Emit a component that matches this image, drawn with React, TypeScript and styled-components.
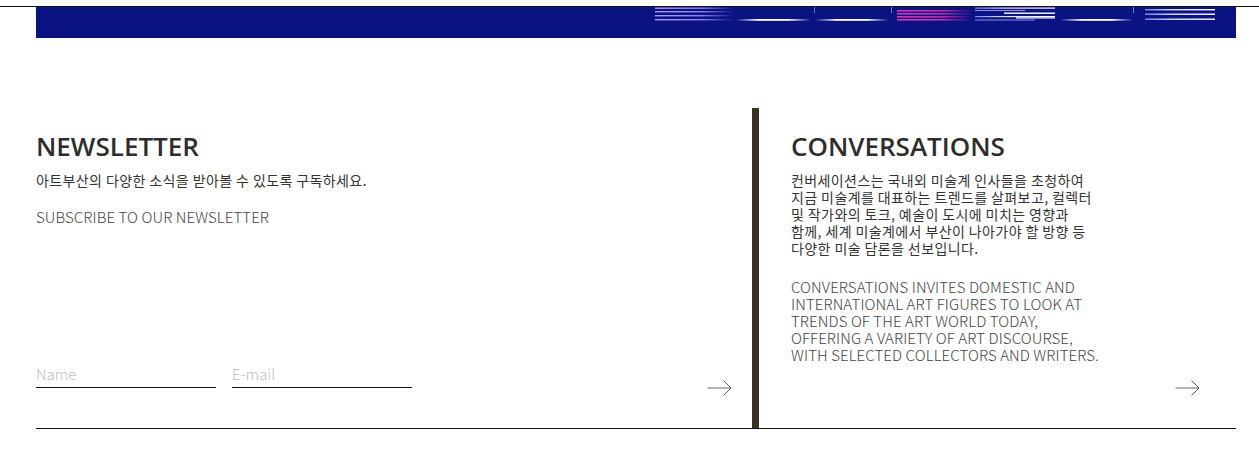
import React from "react";
import styled, { createGlobalStyle } from "styled-components";

const GlobalStyle = createGlobalStyle`
  html, body { margin: 0; padding: 0; background: #fff; }
  body { font-family: "Noto Sans", "Noto Sans CJK KR", sans-serif; color: #333; }
  * { box-sizing: border-box; }
`;

const Page = styled.div`
  width: 1259px;
  padding-top: 6px;
`;

const TopRule = styled.div`
  height: 1px;
  background: #111;
`;

const Banner = styled.div`
  margin-left: 36px;
  width: 1200px;
  height: 31px;
  background: #0b1282;
  line-height: 0;
`;

const Section = styled.section`
  margin: 70px 0 0 36px;
  width: 1200px;
  height: 321px;
  display: grid;
  grid-template-columns: 716px 7px 1fr;
  border-bottom: 1px solid #111;
`;

const Column = styled.div<{ $padLeft: number; $padRight: number }>`
  display: flex;
  flex-direction: column;
  padding: 21px ${(p) => p.$padRight}px 31px ${(p) => p.$padLeft}px;
`;

const Divider = styled.div`
  background: #3b3121;
`;

const Title = styled.h2`
  margin: 0 0 9px;
  font-family: "Open Sans", "Noto Sans", sans-serif;
  font-weight: 600;
  font-size: 26px;
  line-height: 34px;
  color: #2d2d2d;
`;

const KoText = styled.p`
  margin: 0;
  font-family: "Noto Sans CJK KR", sans-serif;
  font-weight: 400;
  font-size: 14px;
  letter-spacing: 0.4px;
  line-height: 17px;
  color: #333;
`;

const EnText = styled.p<{ $gap: number }>`
  margin: ${(p) => p.$gap}px 0 0;
  font-family: "Noto Sans CJK KR", sans-serif;
  font-weight: 300;
  font-size: 15px;
  letter-spacing: 0.1px;
  line-height: 17px;
  color: #444;
`;

const FormRow = styled.div`
  margin-top: auto;
  display: flex;
  align-items: flex-end;
`;

const Fields = styled.div`
  display: flex;
  gap: 16px;
  flex: 1;
  margin-bottom: 9px;
`;

const Field = styled.input`
  width: 180px;
  border: none;
  border-bottom: 1.5px solid #111;
  padding: 0 0 5px;
  outline: none;
  font-family: "Noto Sans CJK KR", sans-serif;
  font-weight: 300;
  font-size: 15px;
  line-height: 17px;
  color: #333;
  background: transparent;
  &::placeholder { color: #bdbdbd; }
`;

const ArrowButton = styled.button`
  border: none;
  background: none;
  padding: 0;
  width: 25px;
  height: 18px;
  display: flex;
  cursor: pointer;
`;

const RightFoot = styled.div`
  margin-top: auto;
  display: flex;
  justify-content: flex-end;
`;

const Arrow = () => (
  <svg width="25" height="18" viewBox="0 0 25 18" fill="none">
    <path d="M0.5 9 H24" stroke="#666" strokeWidth="1" />
    <path d="M16.5 1.5 L24 9 L16.5 16.5" stroke="#444" strokeWidth="0.9" />
  </svg>
);

const BannerArt = () => (
  <svg width="1200" height="31" viewBox="0 0 1200 31">
    <defs>
      <linearGradient id="lav" x1="0" x2="1">
        <stop offset="0" stopColor="#a99cff" />
        <stop offset="0.6" stopColor="#8a80ee" />
        <stop offset="1" stopColor="#0b1282" />
      </linearGradient>
      <linearGradient id="mag" x1="0" x2="1">
        <stop offset="0" stopColor="#e030c0" />
        <stop offset="0.6" stopColor="#c02aa8" />
        <stop offset="1" stopColor="#0b1282" />
      </linearGradient>
      <linearGradient id="sw" x1="0" x2="1">
        <stop offset="0" stopColor="#0b1282" />
        <stop offset="0.3" stopColor="#ffffff" />
        <stop offset="0.7" stopColor="#ffffff" />
        <stop offset="1" stopColor="#0b1282" />
      </linearGradient>
      <linearGradient id="wr" x1="0" x2="1">
        <stop offset="0" stopColor="#7f86e8" />
        <stop offset="0.4" stopColor="#dfe2ff" />
        <stop offset="1" stopColor="#ffffff" />
      </linearGradient>
    </defs>
    {[0.5, 4, 8, 12].map((y) => (
      <rect key={"a" + y} x={619} y={y} width={79} height={1.4} fill="url(#lav)" />
    ))}
    <rect x={700} y={12} width={75} height={1.8} fill="url(#sw)" />
    <rect x={778} y={0} width={0.8} height={6} fill="#8a90e0" />
    <rect x={779} y={12} width={74} height={1.8} fill="url(#sw)" />
    <rect x={855} y={0} width={0.8} height={6} fill="#8a90e0" />
    {[3, 6, 9, 12].map((y) => (
      <rect key={"m" + y} x={861} y={y} width={76} height={1.6} fill="url(#mag)" />
    ))}
    <rect x={939} y={0.5} width={80} height={1.2} fill="url(#wr)" />
    <rect x={939} y={3} width={50} height={1} fill="#8d92e8" />
    <rect x={968} y={5.5} width={51} height={1.4} fill="#ffffff" />
    <rect x={939} y={9} width={80} height={1.2} fill="url(#wr)" />
    <rect x={980} y={10.3} width={39} height={1.2} fill="#ffffff" />
    <rect x={939} y={12.5} width={60} height={1} fill="#8d92e8" />
    <rect x={1024} y={12} width={73} height={1.8} fill="url(#sw)" />
    <rect x={1097} y={0} width={0.8} height={6} fill="#8a90e0" />
    <rect x={1109} y={2} width={70} height={1.4} fill="url(#wr)" />
    <rect x={1109} y={6.5} width={70} height={1.4} fill="url(#wr)" />
    <rect x={1109} y={11.5} width={70} height={1.4} fill="url(#wr)" />
  </svg>
);

export default function App() {
  return (
    <Page>
      <GlobalStyle />
      <TopRule />
      <Banner>
        <BannerArt />
      </Banner>
      <Section>
        <Column $padLeft={0} $padRight={20}>
          <Title>NEWSLETTER</Title>
          <KoText>아트부산의 다양한 소식을 받아볼 수 있도록 구독하세요.</KoText>
          <EnText $gap={19}>SUBSCRIBE TO OUR NEWSLETTER</EnText>
          <FormRow>
            <Fields>
              <Field placeholder="Name" />
              <Field placeholder="E-mail" />
            </Fields>
            <ArrowButton aria-label="subscribe">
              <Arrow />
            </ArrowButton>
          </FormRow>
        </Column>
        <Divider />
        <Column $padLeft={32} $padRight={36}>
          <Title>CONVERSATIONS</Title>
          <KoText>
            컨버세이션스는 국내외 미술계 인사들을 초청하여
            <br />
            지금 미술계를 대표하는 트렌드를 살펴보고, 컬렉터
            <br />
            및 작가와의 토크, 예술이 도시에 미치는 영향과
            <br />
            함께, 세계 미술계에서 부산이 나아가야 할 방향 등
            <br />
            다양한 미술 담론을 선보입니다.
          </KoText>
          <EnText $gap={21}>
            CONVERSATIONS INVITES DOMESTIC AND
            <br />
            INTERNATIONAL ART FIGURES TO LOOK AT
            <br />
            TRENDS OF THE ART WORLD TODAY,
            <br />
            OFFERING A VARIETY OF ART DISCOURSE,
            <br />
            WITH SELECTED COLLECTORS AND WRITERS.
          </EnText>
          <RightFoot>
            <ArrowButton aria-label="more">
              <Arrow />
            </ArrowButton>
          </RightFoot>
        </Column>
      </Section>
    </Page>
  );
}
